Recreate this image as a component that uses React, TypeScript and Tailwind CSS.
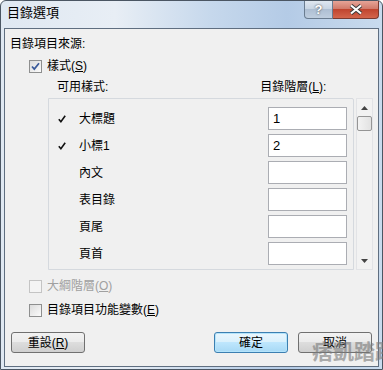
import React from "react";

const font = { fontFamily: '"Liberation Sans", "Noto Sans CJK TC", sans-serif' };

function CheckBox({ checked = false, disabled = false }: { checked?: boolean; disabled?: boolean }) {
  return (
    <div
      className={`w-[13px] h-[13px] border flex items-center justify-center ${
        disabled ? "border-[#c4c4c4] bg-[#f4f4f4]" : "border-[#8e8f8f] bg-gradient-to-br from-[#dcdcdc] to-[#fbfbfb]"
      }`}
    >
      {checked && (
        <svg width="9" height="9" viewBox="0 0 9 9" fill="none">
          <path d="M1 4.5l2.3 2.6L8 1.2" stroke="#3a5a9a" strokeWidth="1.7" />
        </svg>
      )}
    </div>
  );
}

function Tick() {
  return (
    <svg width="8" height="8" viewBox="0 0 8 8" fill="none">
      <path d="M0.8 4.2l2.1 2.5L7.2 0.8" stroke="#111" strokeWidth="1.6" />
    </svg>
  );
}

const rows = [
  { name: "大標題", tick: true, level: "1" },
  { name: "小標1", tick: true, level: "2" },
  { name: "內文", tick: false, level: "" },
  { name: "表目錄", tick: false, level: "" },
  { name: "頁尾", tick: false, level: "" },
  { name: "頁首", tick: false, level: "" },
];

function Btn({ label, k, focused = false }: { label: string; k?: string; focused?: boolean }) {
  return (
    <div
      className={`w-[74px] h-[21px] rounded-[3px] border flex items-center justify-center text-[12px] text-black ${
        focused
          ? "border-[#3c7fb1] bg-[linear-gradient(#eaf6fd_0%,#d9f0fc_50%,#bee6fd_50%,#a7d9f5_100%)] shadow-[inset_0_0_0_1px_#b4e4fb]"
          : "border-[#707070] bg-[linear-gradient(#f2f2f2_0%,#ebebeb_50%,#dddddd_50%,#cfcfcf_100%)]"
      }`}
    >
      <span>
        {label}
        {k && (
          <>
            (<span className="underline">{k}</span>)
          </>
        )}
      </span>
    </div>
  );
}

export default function App() {
  return (
    <div style={font} className="relative w-[383px] h-[370px] overflow-hidden bg-white">
      <div className="w-[383px] h-[370px] flex flex-col rounded-t-[6px] border border-[#4b5663] bg-[linear-gradient(90deg,#dfe8f2_0%,#e8eef5_30%,#c6d8ec_55%,#b4cbe6_75%,#c9dbee_100%)]">
        {/* title bar */}
        <div className="h-[27px] flex items-start justify-between">
          <div className="pl-[6px] pt-[4px] text-[13px] leading-[16px] text-black">目錄選項</div>
          <div className="flex mr-[3px]">
            <div className="w-[29px] h-[18px] rounded-bl-[4px] border border-t-0 border-[#6a7c90] bg-[linear-gradient(#dfe7f0_0%,#c6d3e2_50%,#aebfd3_50%,#bfcedf_100%)] flex items-center justify-center text-[13px] font-bold text-white [text-shadow:0_0_2px_#333]">
              ?
            </div>
            <div className="w-[46px] h-[18px] rounded-br-[4px] border border-t-0 border-l-0 border-[#7a3a30] bg-[linear-gradient(#e6a497_0%,#d17b6b_45%,#c0452f_50%,#d3654c_100%)] flex items-center justify-center">
              <svg width="14" height="11" viewBox="0 0 14 11">
                <path d="M2 1.5l10 8M12 1.5l-10 8" stroke="#3a3a3a" strokeWidth="4" />
                <path d="M2 1.5l10 8M12 1.5l-10 8" stroke="#fff" strokeWidth="2.2" />
              </svg>
            </div>
          </div>
        </div>

        {/* body */}
        <div className="flex-1 mx-[3px] mb-[2px] border border-[#5f6e80] bg-[#f0f0f0] text-[12px] text-black">
          <div className="pl-[5px] mt-[7px] h-[16px] leading-[16px]">目錄項目來源:</div>

          <div className="mt-[6px] ml-[24px] h-[16px] flex items-center gap-[5px]">
            <CheckBox checked />
            <span>
              樣式(<span className="underline">S</span>)
            </span>
          </div>

          <div className="mt-[5px] h-[16px] leading-[16px] flex">
            <span className="ml-[52px]">可用樣式:</span>
            <span className="ml-[152px]">
              目錄階層(<span className="underline">L</span>):
            </span>
          </div>

          <div className="mt-[3px] ml-[43px] flex gap-[2px]">
            <div className="w-[306px] h-[172px] border border-[#d5d9de] rounded-tr-[2px] bg-[#f0f0f0] pt-[8px] flex flex-col gap-[4px]">
              {rows.map((r) => (
                <div key={r.name} className="h-[23px] flex items-center">
                  <div className="w-[30px] pl-[9px] flex items-center">{r.tick && <Tick />}</div>
                  <span className="w-[189px]">{r.name}</span>
                  <div className="w-[79px] h-[23px] border border-[#abadb3] bg-white flex items-center pl-[4px] text-[13px]">
                    {r.level}
                  </div>
                </div>
              ))}
            </div>
            <div className="w-[17px] h-[172px] border border-[#e2e3e6] bg-[#f2f2f2] flex flex-col items-center">
              <div className="h-[17px] flex items-center justify-center">
                <svg width="7" height="4" viewBox="0 0 7 4">
                  <path d="M0 4L3.5 0L7 4Z" fill="#444" />
                </svg>
              </div>
              <div className="w-[15px] h-[15px] rounded-[2px] border border-[#959595] bg-[linear-gradient(90deg,#f3f3f3,#e2e2e2)]" />
              <div className="flex-1" />
              <div className="h-[17px] flex items-center justify-center">
                <svg width="7" height="4" viewBox="0 0 7 4">
                  <path d="M0 0L7 0L3.5 4Z" fill="#444" />
                </svg>
              </div>
            </div>
          </div>

          <div className="mt-[8px] ml-[24px] h-[16px] flex items-center gap-[5px] text-[#a0a0a0]">
            <CheckBox disabled />
            <span>
              大綱階層(<span className="underline">O</span>)
            </span>
          </div>

          <div className="mt-[8px] ml-[24px] h-[16px] flex items-center gap-[5px]">
            <CheckBox />
            <span>
              目錄項目功能變數(<span className="underline">E</span>)
            </span>
          </div>

          <div className="mt-[14px] ml-[6px] mr-[6px] flex">
            <Btn label="重設" k="R" />
            <div className="flex-1" />
            <Btn label="確定" focused />
            <div className="w-[10px]" />
            <Btn label="取消" />
          </div>
        </div>
      </div>
      <div className="absolute left-[312px] top-[340px] text-[21px] font-bold leading-[24px] text-[#7a7a7a] opacity-60 whitespace-nowrap">
        痞凱踏踏
      </div>
    </div>
  );
}
